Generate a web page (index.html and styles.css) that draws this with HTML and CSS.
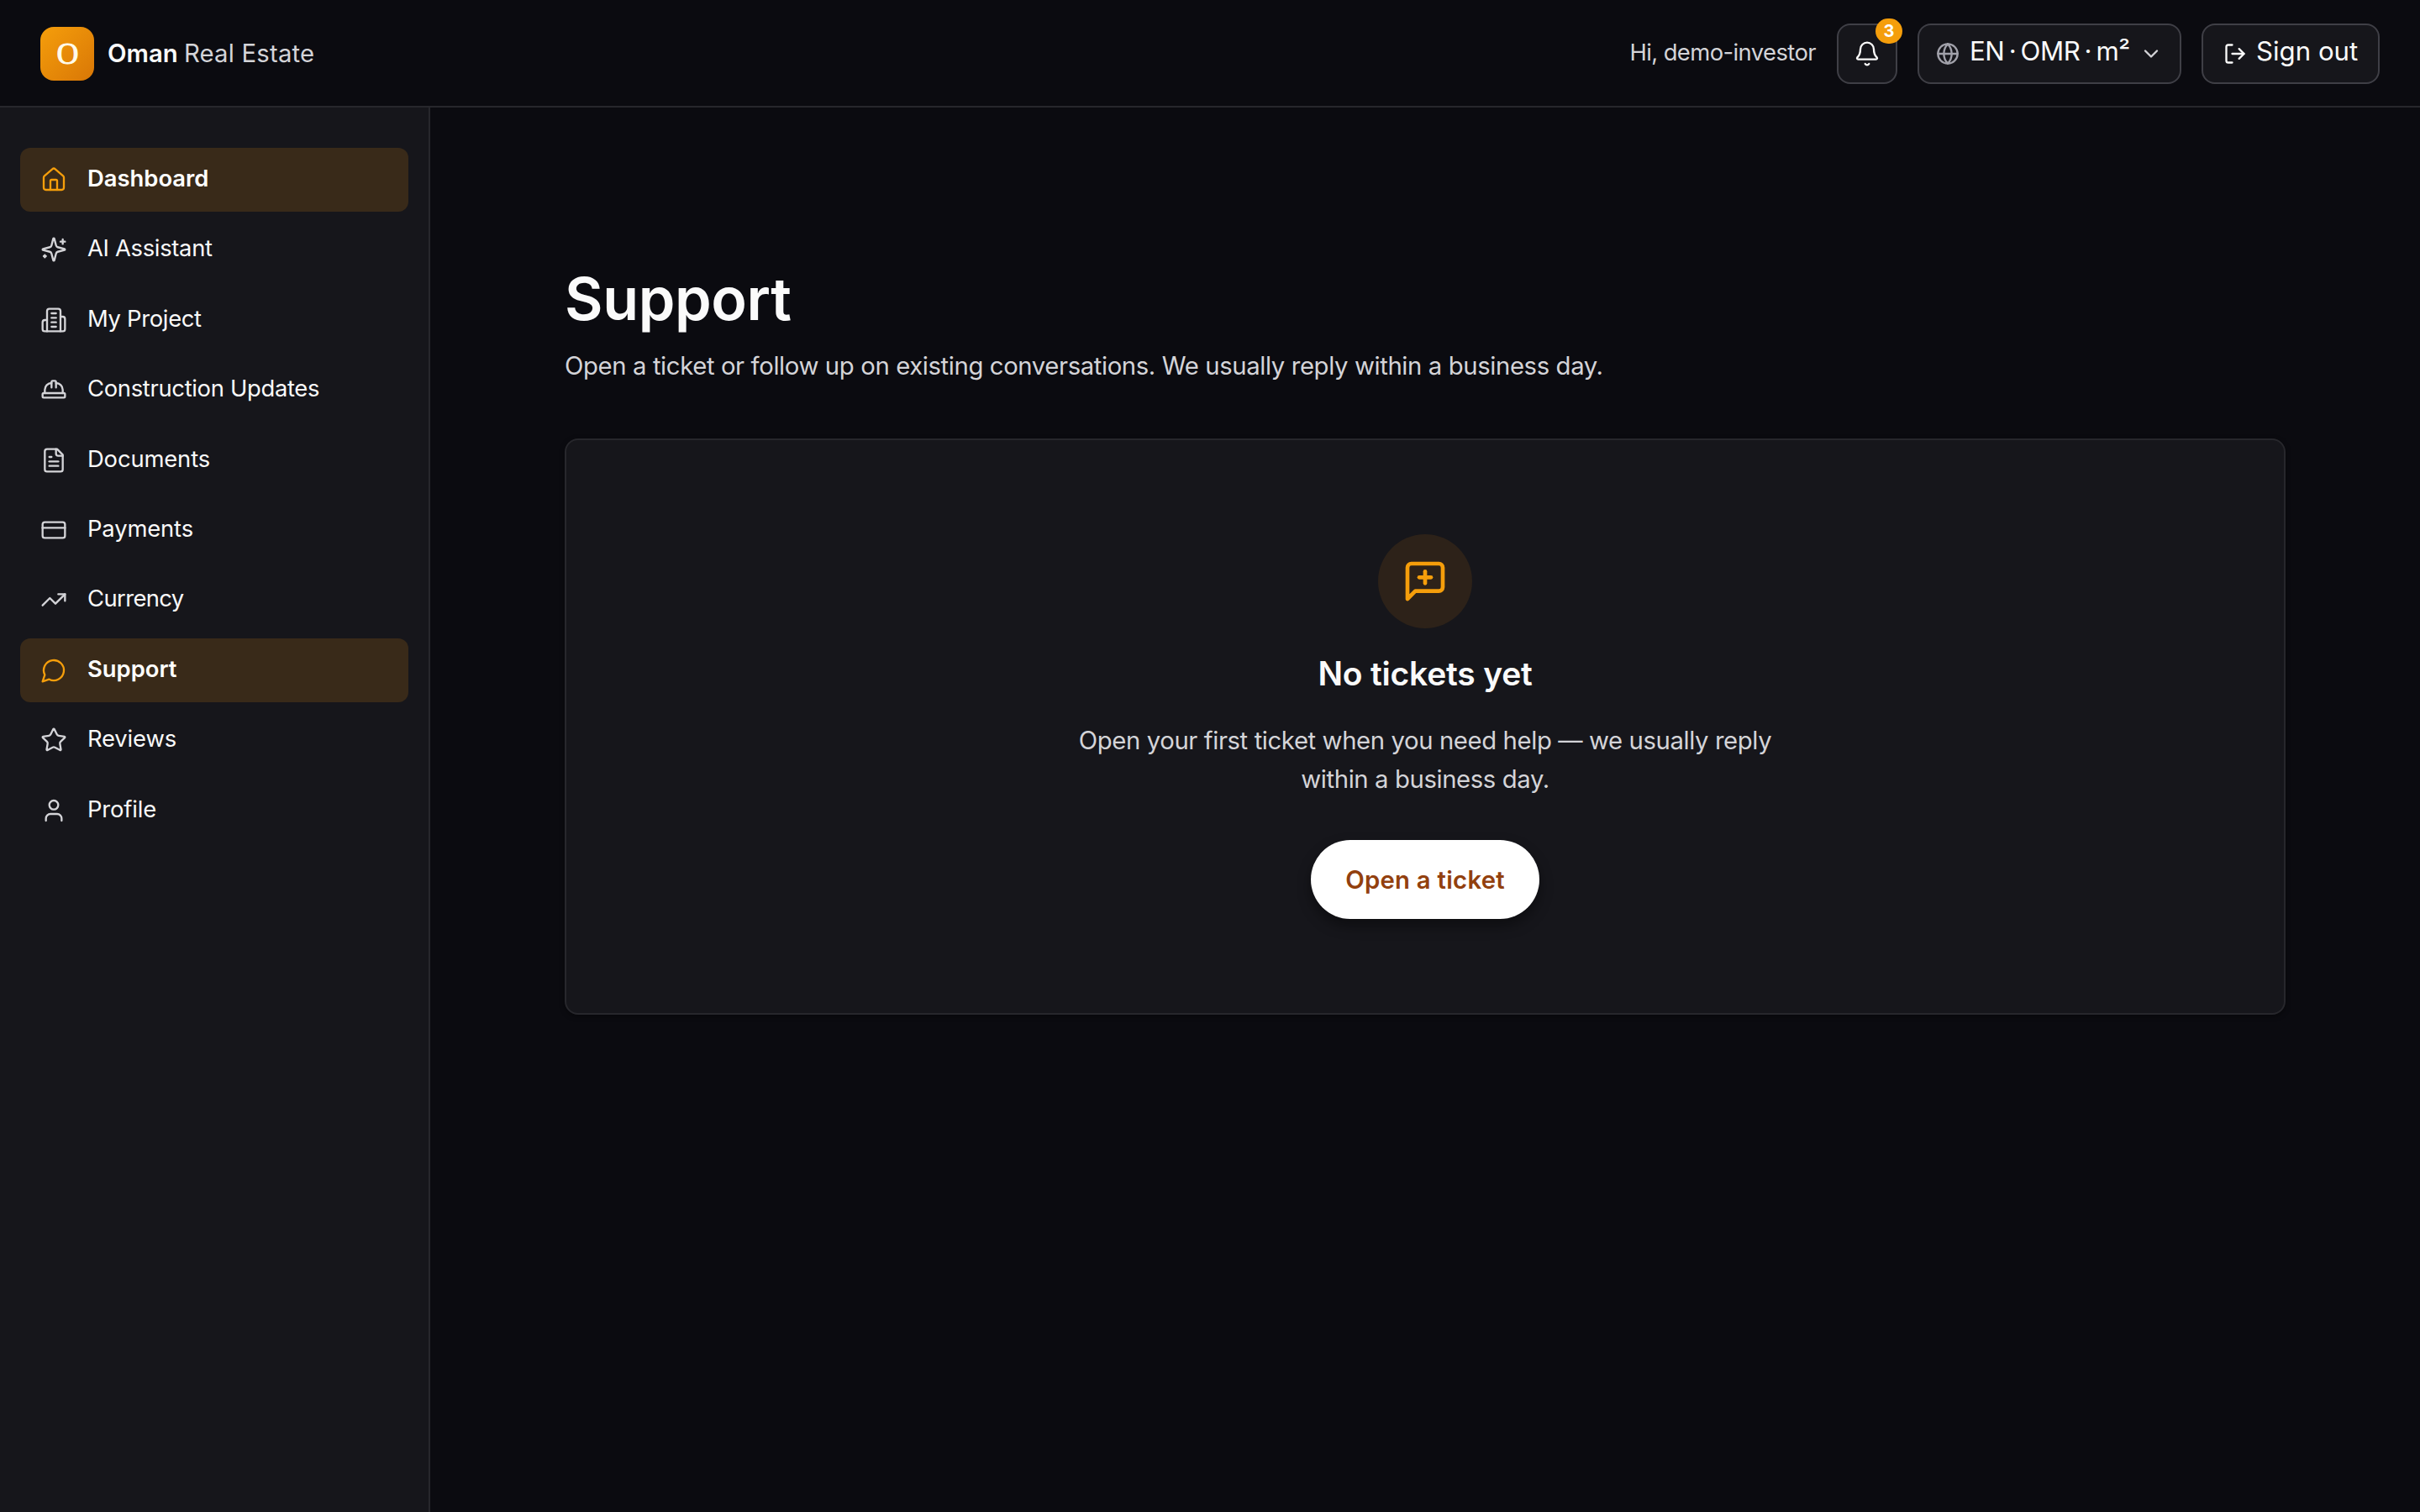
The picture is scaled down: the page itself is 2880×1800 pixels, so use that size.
FILE: index.html
```html
<!DOCTYPE html>
<html lang="en">
<head>
    <meta charset="UTF-8">
    <meta name="viewport" content="width=device-width, initial-scale=1.0">
    <title>Support - Oman Real Estate</title>
    <link rel="stylesheet" href="styles.css">
</head>
<body>
    <header class="topbar">
        <a class="brand" href="#">
            <span class="brand-logo">O</span>
            <span class="brand-name"><strong>Oman</strong> <span class="brand-rest">Real Estate</span></span>
        </a>
        <div class="actions">
            <span class="greeting">Hi, demo-investor</span>
            <button class="btn bell" type="button" aria-label="Notifications">
                <svg class="icon" viewBox="0 0 24 24"><path d="M10.268 21a2 2 0 0 0 3.464 0"/><path d="M3.262 15.326A1 1 0 0 0 4 17h16a1 1 0 0 0 .74-1.673C19.41 13.956 18 12.499 18 8A6 6 0 0 0 6 8c0 4.499-1.411 5.956-2.738 7.326"/></svg>
                <span class="badge">3</span>
            </button>
            <button class="btn locale" type="button">
                <svg class="icon icon-sm icon-globe" viewBox="0 0 24 24"><circle cx="12" cy="12" r="10"/><path d="M12 2a14.5 14.5 0 0 0 0 20 14.5 14.5 0 0 0 0-20"/><path d="M2 12h20"/></svg>
                <span class="btn-label">EN · OMR · m²</span>
                <svg class="icon icon-sm icon-chevron" viewBox="0 0 24 24"><path d="m6 9 6 6 6-6"/></svg>
            </button>
            <button class="btn signout" type="button">
                <svg class="icon icon-sm" viewBox="0 0 24 24"><path d="M9 21H5a2 2 0 0 1-2-2V5a2 2 0 0 1 2-2h4"/><path d="m16 17 5-5-5-5"/><path d="M21 12H9"/></svg>
                <span class="btn-label">Sign out</span>
            </button>
        </div>
    </header>

    <div class="layout">
        <nav class="sidebar">
            <a class="nav-item active" href="#">
                <svg class="icon" viewBox="0 0 24 24"><path d="M15 21v-8a1 1 0 0 0-1-1h-4a1 1 0 0 0-1 1v8"/><path d="M3 10a2 2 0 0 1 .709-1.528l7-5.999a2 2 0 0 1 2.582 0l7 5.999A2 2 0 0 1 21 10v9a2 2 0 0 1-2 2H5a2 2 0 0 1-2-2z"/></svg>
                <span>Dashboard</span>
            </a>
            <a class="nav-item tight" href="#">
                <svg class="icon" viewBox="0 0 24 24"><path d="M9.937 15.5A2 2 0 0 0 8.5 14.063l-6.135-1.582a.5.5 0 0 1 0-.962L8.5 9.936A2 2 0 0 0 9.937 8.5l1.582-6.135a.5.5 0 0 1 .963 0L14.063 8.5A2 2 0 0 0 15.5 9.937l6.135 1.581a.5.5 0 0 1 0 .964L15.5 14.063a2 2 0 0 0-1.437 1.437l-1.582 6.135a.5.5 0 0 1-.963 0z"/><path d="M20 3v4"/><path d="M22 5h-4"/><path d="M4 17v2"/><path d="M5 18H3"/></svg>
                <span>AI Assistant</span>
            </a>
            <a class="nav-item tight" href="#">
                <svg class="icon" viewBox="0 0 24 24"><path d="M6 22V4a2 2 0 0 1 2-2h8a2 2 0 0 1 2 2v18Z"/><path d="M6 12H4a2 2 0 0 0-2 2v6a2 2 0 0 0 2 2h2"/><path d="M18 9h2a2 2 0 0 1 2 2v9a2 2 0 0 1-2 2h-2"/><path d="M10 6h4"/><path d="M10 10h4"/><path d="M10 14h4"/><path d="M10 18h4"/></svg>
                <span>My Project</span>
            </a>
            <a class="nav-item tight" href="#">
                <svg class="icon" viewBox="0 0 24 24"><path d="M10 10V5a1 1 0 0 1 1-1h2a1 1 0 0 1 1 1v5"/><path d="M14 6a6 6 0 0 1 6 6v3"/><path d="M4 15v-3a6 6 0 0 1 6-6"/><rect x="2" y="15" width="20" height="4" rx="1"/></svg>
                <span>Construction Updates</span>
            </a>
            <a class="nav-item" href="#">
                <svg class="icon" viewBox="0 0 24 24"><path d="M15 2H6a2 2 0 0 0-2 2v16a2 2 0 0 0 2 2h12a2 2 0 0 0 2-2V7Z"/><path d="M14 2v4a2 2 0 0 0 2 2h4"/><path d="M10 9H8"/><path d="M16 13H8"/><path d="M16 17H8"/></svg>
                <span>Documents</span>
            </a>
            <a class="nav-item" href="#">
                <svg class="icon" viewBox="0 0 24 24"><rect x="2" y="5" width="20" height="14" rx="2"/><path d="M2 10h20"/></svg>
                <span>Payments</span>
            </a>
            <a class="nav-item tighter" href="#">
                <svg class="icon" viewBox="0 0 24 24"><path d="M22 7 13.5 15.5 8.5 10.5 2 17"/><path d="M16 7h6v6"/></svg>
                <span>Currency</span>
            </a>
            <a class="nav-item active" href="#">
                <svg class="icon" viewBox="0 0 24 24"><path d="M7.9 20A9 9 0 1 0 4 16.1L2 22Z"/></svg>
                <span>Support</span>
            </a>
            <a class="nav-item" href="#">
                <svg class="icon" viewBox="0 0 24 24"><path d="M11.525 2.295a.53.53 0 0 1 .95 0l2.31 4.679a2.123 2.123 0 0 0 1.595 1.16l5.166.756a.53.53 0 0 1 .294.904l-3.736 3.638a2.123 2.123 0 0 0-.611 1.878l.882 5.14a.53.53 0 0 1-.771.56l-4.618-2.428a2.122 2.122 0 0 0-1.973 0L6.396 21.01a.53.53 0 0 1-.77-.56l.881-5.139a2.122 2.122 0 0 0-.611-1.879L2.16 9.795a.53.53 0 0 1 .294-.906l5.165-.755a2.122 2.122 0 0 0 1.597-1.16z"/></svg>
                <span>Reviews</span>
            </a>
            <a class="nav-item" href="#">
                <svg class="icon" viewBox="0 0 24 24"><path d="M19 21v-2a4 4 0 0 0-4-4H9a4 4 0 0 0-4 4v2"/><circle cx="12" cy="7" r="4"/></svg>
                <span>Profile</span>
            </a>
        </nav>

        <main class="content">
            <div class="container">
                <h1>Support</h1>
                <p class="lead">Open a ticket or follow up on existing conversations. We usually reply within a business day.</p>
                <section class="card">
                    <div class="empty-icon">
                        <svg viewBox="0 0 24 24"><path d="M21 15a2 2 0 0 1-2 2H7l-4 4V5a2 2 0 0 1 2-2h14a2 2 0 0 1 2 2z"/><path d="M12 7v6"/><path d="M9 10h6"/></svg>
                    </div>
                    <h2>No tickets yet</h2>
                    <p class="empty-text">Open your first ticket when you need help — we usually reply within a business day.</p>
                    <button class="open-ticket" type="button">Open a ticket</button>
                </section>
            </div>
        </main>
    </div>
</body>
</html>
```
FILE: styles.css
```css
* {
    box-sizing: border-box;
}
body {
    font-family: Inter, "Liberation Sans", sans-serif;
    margin: 0;
    min-height: 100vh;
    display: flex;
    flex-direction: column;
    background-color: #0b0b10;
    color: #fafafa;
}
a {
    color: inherit;
    text-decoration: none;
}
button {
    font-family: inherit;
    color: inherit;
    cursor: pointer;
}
h1, h2, p {
    margin: 0;
}
svg {
    fill: none;
    stroke: currentColor;
    stroke-width: 2;
    stroke-linecap: round;
    stroke-linejoin: round;
    flex-shrink: 0;
}
.icon {
    width: 32px;
    height: 32px;
    stroke-width: 1.75;
}
.icon-sm {
    width: 28px;
    height: 28px;
    stroke-width: 2;
}

/* Top bar */
.topbar {
    display: flex;
    align-items: center;
    justify-content: space-between;
    height: 128px;
    padding: 28px 48px 26px;
    border-bottom: 2px solid #27272c;
}
.brand {
    display: flex;
    align-items: center;
    gap: 16px;
}
.brand-logo {
    width: 64px;
    height: 64px;
    padding-left: 1px;
    border-radius: 16px;
    background: linear-gradient(135deg, #f59e0b, #d97706);
    color: #fffbeb;
    font-family: "Liberation Serif", serif;
    font-size: 36px;
    line-height: 64px;
    text-align: center;
    -webkit-text-stroke: 1px #fffbeb;
}
.brand-name {
    font-size: 29.3px;
    padding-bottom: 2px;
}
.brand-name strong {
    font-weight: 600;
}
.brand-rest {
    color: #d4d4d8;
    letter-spacing: 0.2px;
    margin-left: -1px;
}
.actions {
    display: flex;
    align-items: center;
    gap: 24px;
}
.greeting {
    margin-right: 1px;
    font-size: 27.4px;
    letter-spacing: -0.58px;
    color: #d4d4d8;
    padding-bottom: 4px;
}
.btn {
    display: flex;
    align-items: center;
    height: 72px;
    padding: 0;
    border: 2px solid #3f3f46;
    border-radius: 16px;
    background-color: #16161b;
    font-size: 31.2px;
}
.btn-label {
    padding-bottom: 7px;
    white-space: nowrap;
}
.bell {
    position: relative;
    width: 72px;
    justify-content: center;
}
.badge {
    position: absolute;
    top: -8px;
    right: -8px;
    width: 32px;
    height: 30px;
    border-radius: 15px;
    background-color: #f59e0b;
    color: #fff;
    font-size: 20px;
    font-weight: 700;
    line-height: 30px;
    text-align: center;
}
.locale {
    width: 314px;
    padding: 0 20px;
    letter-spacing: -0.45px;
    word-spacing: -3px;
}
.locale .btn-label {
    margin-left: 12px;
}
.icon-globe {
    color: #a1a1aa;
}
.icon-chevron {
    color: #d4d4d8;
    margin-left: auto;
}
.signout {
    width: 212px;
    padding: 0 0 0 24px;
    gap: 11px;
}

/* Sidebar */
.layout {
    display: flex;
    flex: 1;
}
.sidebar {
    display: flex;
    flex-direction: column;
    gap: 7.4px;
    width: 512px;
    padding: 48px 24px;
    background-color: #16161b;
    border-right: 2px solid #27272c;
}
.nav-item {
    display: flex;
    align-items: center;
    gap: 24px;
    height: 76px;
    padding: 0 24px;
    border-radius: 12px;
    font-size: 27.4px;
    letter-spacing: -0.15px;
}
.nav-item span {
    padding-bottom: 4px;
}
.nav-item .icon {
    color: #d4d4d8;
}
.nav-item.tight {
    letter-spacing: -0.32px;
}
.nav-item.tighter {
    letter-spacing: -0.6px;
}
.nav-item.active {
    background-color: #392a19;
    color: #fff;
    font-weight: 600;
    letter-spacing: 0;
}
.nav-item.active .icon {
    color: #f59e0b;
}

/* Content */
.content {
    flex: 1;
    padding: 188px 0 0;
}
.container {
    width: 2048px;
    margin: 0 auto;
}
h1 {
    font-size: 70px;
    font-weight: 600;
    line-height: 80px;
    letter-spacing: -0.35px;
}
.lead {
    margin-top: 16px;
    font-size: 29.3px;
    line-height: 48px;
    letter-spacing: -0.39px;
    color: #d4d4d8;
}
.card {
    display: flex;
    flex-direction: column;
    align-items: center;
    margin-top: 62px;
    padding: 112px 0;
    border: 2px solid #27272c;
    border-radius: 16px;
    background-color: #16161b;
    box-shadow: 0 2px 6px rgba(0, 0, 0, 0.4);
}
.empty-icon {
    display: flex;
    align-items: center;
    justify-content: center;
    width: 112px;
    height: 112px;
    border-radius: 50%;
    background-color: #2d2219;
    color: #f59e0b;
}
.empty-icon svg {
    width: 56px;
    height: 56px;
}
h2 {
    margin-top: 26px;
    font-size: 39px;
    font-weight: 600;
    line-height: 56px;
    letter-spacing: -0.2px;
}
.empty-text {
    max-width: 880px;
    margin-top: 29px;
    font-size: 29.3px;
    line-height: 46px;
    letter-spacing: -0.4px;
    text-align: center;
    color: #d4d4d8;
}
.open-ticket {
    width: 272px;
    height: 94px;
    margin-top: 49px;
    padding: 0;
    border: none;
    border-radius: 47px;
    background-color: #fff;
    color: #92400e;
    font-size: 29.3px;
    font-weight: 600;
    letter-spacing: 0.25px;
    box-shadow: 0 8px 16px rgba(0, 0, 0, 0.4);
}
```
